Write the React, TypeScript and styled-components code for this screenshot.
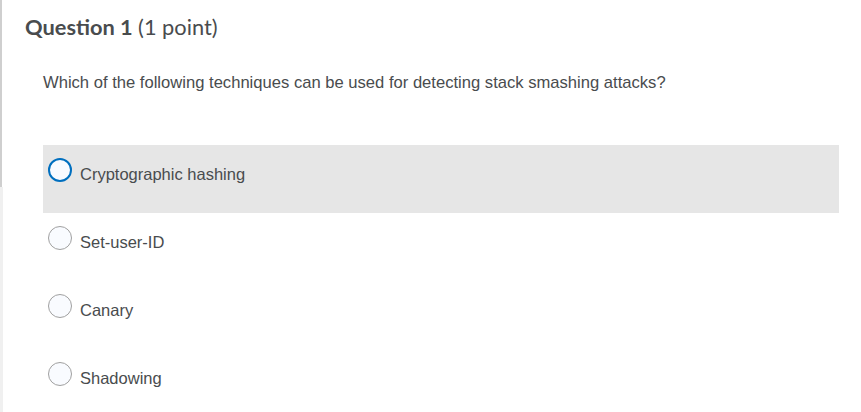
import React from "react";
import styled, { createGlobalStyle } from "styled-components";

const Global = createGlobalStyle`
  html, body { margin: 0; padding: 0; background: #ffffff; }
  body { font-family: "Liberation Sans", Arial, sans-serif; }
`;

const Page = styled.div`
  display: flex;
  width: 861px;
  height: 412px;
  overflow: hidden;
`;

const Rail = styled.div`
  display: flex;
  flex-direction: column;
  width: 3px;
  flex: none;
`;

const RailSegment = styled.div<{ $h?: number; $color: string; $w: number }>`
  width: ${(p) => p.$w}px;
  background: ${(p) => p.$color};
  ${(p) => (p.$h ? `height: ${p.$h}px;` : "flex: 1;")}
`;

const Main = styled.div`
  flex: 1;
  padding-left: 22px;
  display: flex;
  flex-direction: column;
`;

const Title = styled.h2`
  margin: 14px 0 0 0;
  font-family: Lato, "Liberation Sans", sans-serif;
  font-size: 21.8px;
  line-height: 26px;
  font-weight: 700;
  color: #494c4e;
`;

const Points = styled.span`
  font-weight: 400;
`;

const Prompt = styled.p`
  margin: 33px 0 0 18px;
  font-size: 16.6px;
  line-height: 20px;
  color: #494c4e;
`;

const Options = styled.div`
  margin: 52px 0 0 18px;
  width: 796px;
  display: flex;
  flex-direction: column;
`;

const Option = styled.label<{ $active?: boolean }>`
  display: flex;
  align-items: flex-start;
  gap: 8px;
  height: 68px;
  padding: 13px 0 0 5px;
  box-sizing: border-box;
  background: ${(p) => (p.$active ? "#e6e6e6" : "transparent")};
  cursor: pointer;
`;

const Radio = styled.span<{ $active?: boolean }>`
  width: 24px;
  height: 24px;
  box-sizing: border-box;
  border-radius: 50%;
  background: #f9fbff;
  border: ${(p) => (p.$active ? "2px solid #006fbf" : "1px solid #a0a0a0")};
  flex: none;
`;

const OptionText = styled.span`
  margin-top: 6px;
  font-size: 16.5px;
  line-height: 20px;
  color: #494c4e;
`;

const choices = ["Cryptographic hashing", "Set-user-ID", "Canary", "Shadowing"];

export default function App() {
  return (
    <>
      <Global />
      <Page>
        <Rail>
          <RailSegment $h={187} $w={2} $color="#cfcfcf" />
          <RailSegment $w={3} $color="#f0f0f0" />
        </Rail>
        <Main>
          <Title>
            Question 1 <Points>(1 point)</Points>
          </Title>
          <Prompt>
            Which of the following techniques can be used for detecting stack smashing attacks?
          </Prompt>
          <Options>
            {choices.map((c, i) => (
              <Option key={c} $active={i === 0}>
                <Radio $active={i === 0} />
                <OptionText>{c}</OptionText>
              </Option>
            ))}
          </Options>
        </Main>
      </Page>
    </>
  );
}
